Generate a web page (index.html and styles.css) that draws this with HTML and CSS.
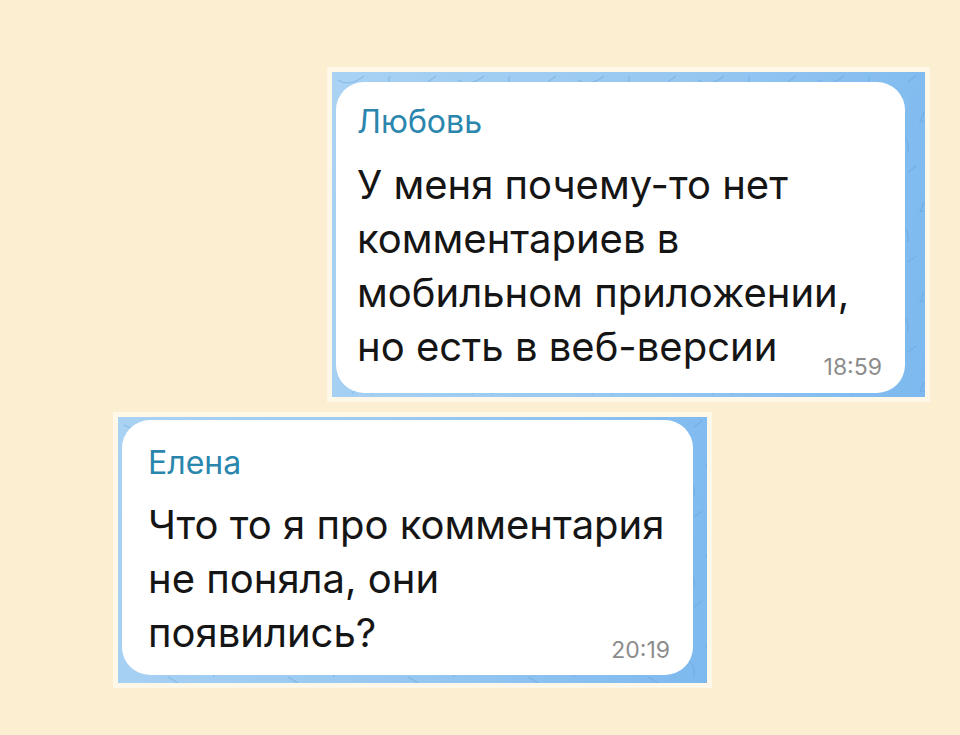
FILE: index.html
```html
<!DOCTYPE html>
<html lang="ru">
<head>
    <meta charset="UTF-8">
    <meta name="viewport" content="width=device-width, initial-scale=1.0">
    <title>Комментарии</title>
    <link rel="stylesheet" href="styles.css">
</head>
<body>

<div class="stage">
    <div class="shot shot-first">
        <div class="chat">
            <div class="bubble">
                <div class="author">Любовь</div>
                <p class="text">У меня почему-то нет<br>комментариев в<br>мобильном приложении,<br>но есть в веб-версии</p>
                <div class="time">18:59</div>
            </div>
        </div>
    </div>

    <div class="shot shot-second">
        <div class="chat">
            <div class="bubble">
                <div class="author">Елена</div>
                <p class="text">Что то я про комментария<br>не поняла, они<br>появились?</p>
                <div class="time">20:19</div>
            </div>
        </div>
    </div>
</div>

</body>
</html>
```

FILE: styles.css
```css
body {
    margin: 0;
    padding: 0;
    background-color: #fcefd1;
    font-family: Inter, "Liberation Sans", sans-serif;
    min-height: 100vh;
}
.stage {
    padding-top: 67px;
    display: flex;
    flex-direction: column;
}
.shot {
    background-color: #fff8e8;
    padding: 5px;
    box-sizing: border-box;
}
.shot-first {
    margin-left: 327px;
    width: 603px;
}
.shot-second {
    margin-top: 10px;
    margin-left: 113px;
    width: 599px;
}
/* chat wallpaper: thin doodle strokes over a soft blue gradient */
.chat {
    background-color: #95c7f1;
    background-image:
        url("data:image/svg+xml,%3Csvg xmlns='http://www.w3.org/2000/svg' width='120' height='90'%3E%3Cg fill='none' stroke='%235f9fd8' stroke-opacity='.45' stroke-width='1.2'%3E%3Cpath d='M6 8c10 6 18 2 26-4'/%3E%3Cpath d='M58 4c-4 8 2 14 10 16'/%3E%3Cpath d='M96 10l8-6'/%3E%3Cpath d='M20 52c6-8 16-8 20 0'/%3E%3Cpath d='M84 60c8 2 14 10 12 20'/%3E%3Cpath d='M112 40l-4 10 8-2'/%3E%3Cpath d='M50 80l10 6'/%3E%3C/g%3E%3C/svg%3E"),
        linear-gradient(100deg, #a9d2f3 0%, #96c7f1 55%, #7db9ef 100%);
}
.shot-first .chat {
    padding: 10px 20px 4px 4px;
}
.shot-second .chat {
    padding: 3px 14px 8px 4px;
}
.bubble {
    background: white;
    border-radius: 28px;
}
.shot-first .bubble {
    padding: 21px 23px 13px 21px;
}
.shot-second .bubble {
    padding: 24px 23px 12px 26px;
}
.author {
    color: #2a86ad;
    font-size: 32px;
    line-height: 38px;
}
.text {
    margin: 17px 0 0;
    color: #151515;
    font-size: 40px;
    line-height: 54px;
}
.shot-second .text {
    margin-top: 16px;
}
.time {
    color: #8c8c8c;
    font-size: 23px;
    line-height: 26px;
    text-align: right;
    margin-top: -20px;
}
.shot-second .time {
    margin-top: -23px;
}
```
